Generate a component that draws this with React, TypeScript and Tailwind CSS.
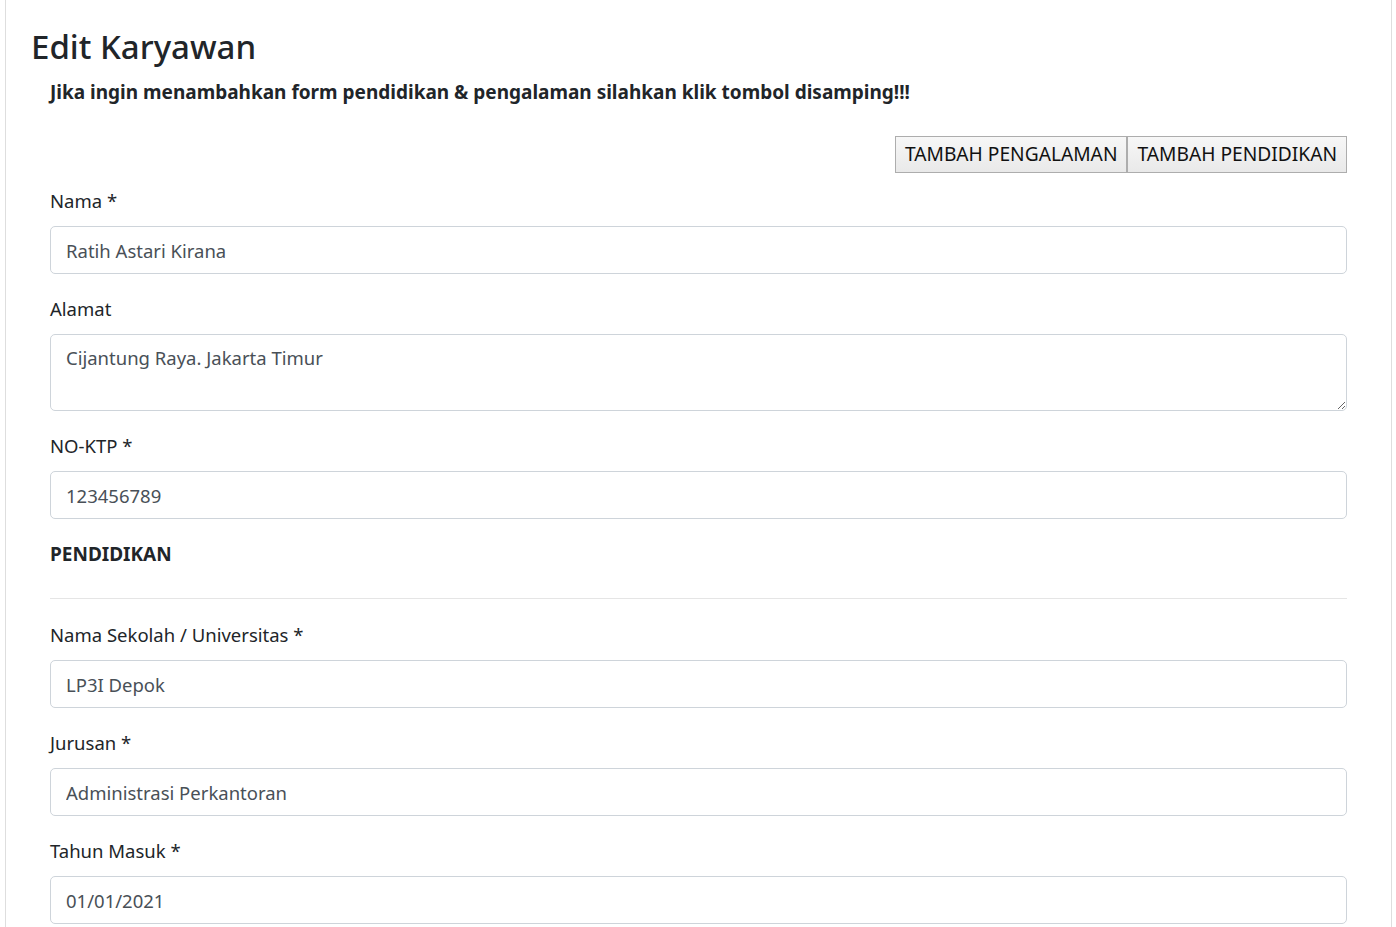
import React from 'react';

const font = { fontFamily: '"Segoe UI", "Noto Sans", "Liberation Sans", sans-serif' };

function Field({ label, value, area }: { label: string; value: string; area?: boolean }) {
	return (
		<div className="mb-[20px]">
			<label className="mb-[10px] block h-[30px] text-[18.5px] leading-[30px] text-[#212529]">{label}</label>
			{area ? (
				<textarea
					rows={2}
					defaultValue={value}
					className="block h-[77px] w-full resize-y rounded-[5px] border border-[#ced4da] bg-white px-[15px] py-[8px] text-[18.5px] leading-[30px] text-[#495057] outline-none"
				/>
			) : (
				<input
					type="text"
					defaultValue={value}
					className="block h-[48px] w-full rounded-[5px] border border-[#ced4da] bg-white px-[15px] text-[18.5px] text-[#495057] outline-none"
				/>
			)}
		</div>
	);
}

export default function App() {
	return (
		<div className="min-h-screen bg-white" style={font}>
			<div className="ml-[5px] w-[1387px] border-x border-[#dedede] px-[25px] pt-[26px] pb-[40px]">
				<h3 className="mb-[9px] h-[42px] text-[33px] leading-[42px] font-medium text-[#212529]">Edit Karyawan</h3>
				<div className="px-[19px]">
					<p className="h-[30px] text-[19px] leading-[30px] font-bold text-[#212529]">
						Jika ingin menambahkan form pendidikan &amp; pengalaman silahkan klik tombol disamping!!!
					</p>
					<div className="mt-[29px] mb-[13px] flex justify-end">
						<button className="h-[37px] border border-[#adadad] bg-gradient-to-b from-[#f7f7f7] to-[#e9e9e9] px-[9px] text-[19.2px] text-[#111]">
							TAMBAH PENGALAMAN
						</button>
						<button className="h-[37px] border border-[#adadad] bg-gradient-to-b from-[#f7f7f7] to-[#e9e9e9] px-[9px] text-[19.2px] text-[#111]">
							TAMBAH PENDIDIKAN
						</button>
					</div>
					<Field label="Nama *" value="Ratih Astari Kirana" />
					<Field label="Alamat" value="Cijantung Raya. Jakarta Timur" area />
					<Field label="NO-KTP *" value="123456789" />
					<h6 className="mb-[10px] h-[30px] text-[19px] leading-[30px] font-bold text-[#212529]">PENDIDIKAN</h6>
					<hr className="mt-[29px] mb-[21px] border-t border-[#e5e5e5]" />
					<Field label="Nama Sekolah / Universitas *" value="LP3I Depok" />
					<Field label="Jurusan *" value="Administrasi Perkantoran" />
					<Field label="Tahun Masuk *" value="01/01/2021" />
				</div>
			</div>
		</div>
	);
}
